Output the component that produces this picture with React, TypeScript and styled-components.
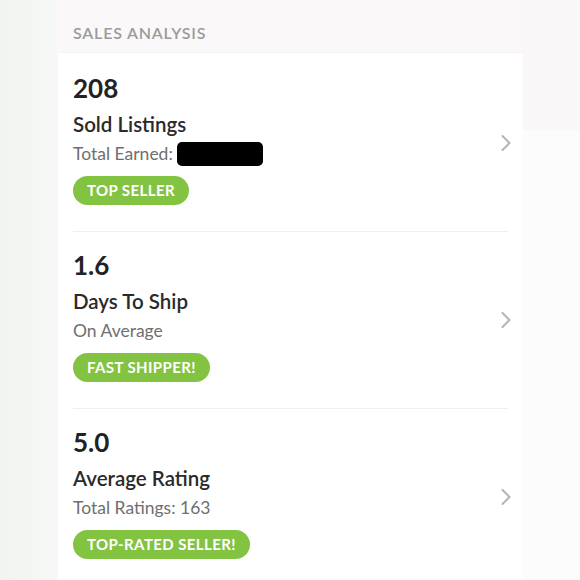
import React from 'react';
import styled, { createGlobalStyle } from 'styled-components';

const GlobalStyle = createGlobalStyle`
  html, body {
    margin: 0;
    padding: 0;
    background: #ffffff;
  }
  body {
    font-family: Lato, "Open Sans", "Liberation Sans", sans-serif;
    -webkit-font-smoothing: antialiased;
  }
`;

type Stat = {
  value: string;
  title: string;
  sub: string;
  hidden?: boolean;
  badge: string;
};

const stats: Stat[] = [
  { value: '208', title: 'Sold Listings', sub: 'Total Earned:', hidden: true, badge: 'TOP SELLER' },
  { value: '1.6', title: 'Days To Ship', sub: 'On Average', badge: 'FAST SHIPPER!' },
  { value: '5.0', title: 'Average Rating', sub: 'Total Ratings: 163', badge: 'TOP-RATED SELLER!' },
];

const Chevron: React.FC = () => (
  <svg width="12" height="18" viewBox="0 0 12 18" fill="none">
    <path d="M2.5 2l7 7-7 7" stroke="#b4b4b4" strokeWidth="2" strokeLinecap="round" strokeLinejoin="round" />
  </svg>
);

export default function App() {
  return (
    <>
      <GlobalStyle />
      <Page>
        <LeftGutter />
        <Panel>
          <Header>SALES ANALYSIS</Header>
          <List>
            {stats.map((s, i) => (
              <Row key={s.title} last={i === stats.length - 1}>
                <Info>
                  <Value>{s.value}</Value>
                  <Title>{s.title}</Title>
                  <Sub>
                    {s.sub}
                    {s.hidden && <Redacted />}
                  </Sub>
                  <Badge>{s.badge}</Badge>
                </Info>
                <Chevron />
              </Row>
            ))}
          </List>
        </Panel>
        <RightGutter>
          <RightTop />
        </RightGutter>
      </Page>
    </>
  );
}

const Page = styled.div`
  display: flex;
  width: 580px;
  height: 580px;
  overflow: hidden;
`;

const LeftGutter = styled.div`
  width: 58px;
  flex-shrink: 0;
  background: linear-gradient(90deg, #f1f4f0 0%, #f3f6f2 60%, #f7f9f6 100%);
`;

const Panel = styled.div`
  width: 465px;
  flex-shrink: 0;
  display: flex;
  flex-direction: column;
  background: #ffffff;
`;

const Header = styled.div`
  flex-shrink: 0;
  height: 53px;
  box-sizing: border-box;
  padding: 23px 0 0 15px;
  background: #faf8f9;
  border-bottom: 1px solid #f4f2f3;
  color: #9a9a9a;
  font-size: 16px;
  font-weight: 600;
  letter-spacing: 0.8px;
`;

const List = styled.div`
  display: flex;
  flex-direction: column;
  flex-shrink: 0;
  padding: 2px 15px 0 15px;
`;

const Row = styled.div<{ last: boolean }>`
  display: flex;
  align-items: flex-start;
  justify-content: space-between;
  flex-shrink: 0;
  height: 177px;
  box-sizing: border-box;
  padding-top: 18px;
  border-bottom: ${(p) => (p.last ? 'none' : '1px solid #eeeeee')};
  svg {
    margin-top: 61px;
    margin-right: -4px;
  }
`;

const Info = styled.div`
  display: flex;
  flex-direction: column;
  align-items: flex-start;
`;

const Value = styled.div`
  font-size: 26px;
  font-weight: 700;
  color: #222222;
  line-height: 30px;
`;

const Title = styled.div`
  margin-top: 8px;
  font-size: 20.5px;
  font-weight: 600;
  color: #2a2a2a;
  line-height: 26px;
`;

const Sub = styled.div`
  display: flex;
  align-items: center;
  margin-top: 4px;
  font-size: 17.5px;
  color: #6f6f6f;
  line-height: 26px;
`;

const Redacted = styled.span`
  display: inline-block;
  width: 86px;
  height: 24px;
  margin-left: 4px;
  background: #000;
  border-radius: 5px;
  filter: blur(0.6px);
`;

const Badge = styled.div`
  margin-top: 9px;
  height: 29px;
  line-height: 29px;
  padding: 0 14px;
  border-radius: 15px;
  background: #82c341;
  color: #ffffff;
  font-size: 15px;
  font-weight: 700;
  letter-spacing: 0.4px;
`;

const RightGutter = styled.div`
  flex: 1;
  background: #fdfcfd;
`;

const RightTop = styled.div`
  height: 130px;
  background: #fbf7f8;
`;
